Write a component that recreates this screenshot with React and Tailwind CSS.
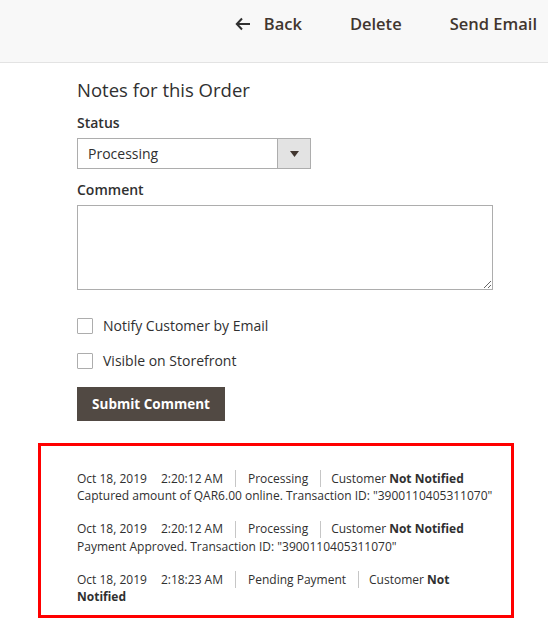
import React from "react";

function Sep() {
  return <span className="inline-block align-middle w-px h-[17px] bg-[#c6c6c6] mx-[12px] -mt-[2px]" />;
}

function Entry({ date, time, status, note, last }) {
  return (
    <div className={last ? "" : "mb-[16px]"}>
      <div className="leading-[17px]">
        <span>{date}</span>
        <span className="ml-[14px]">{time}</span>
        <Sep />
        <span>{status}</span>
        <span className="inline-block align-middle w-px h-[17px] bg-[#c6c6c6] ml-[12px] mr-[10px] -mt-[2px]" />
        <span>Customer </span>
        <span className="font-bold">Not</span> <span className="font-bold">Notified</span>
      </div>
      {note && <div className="leading-[17px]">{note}</div>}
    </div>
  );
}

export default function App() {
  return (
    <div className="w-[548px] h-[632px] bg-white text-[#303030] overflow-hidden" style={{ fontFamily: '"Open Sans", sans-serif' }}>
      <div className="h-[63px] bg-[#f8f8f8] border-b border-[#e3e3e3] flex items-start justify-end pr-[11px] pt-[12px] text-[16.5px] font-semibold text-[#41362f]">
        <div className="flex items-center gap-[13px] leading-[24px]">
          <svg width="16" height="14" viewBox="0 0 16 14" className="mt-[-1px]">
            <path d="M7 1.5 L1.8 7 L7 12.5 M2 7 H15" stroke="#303030" strokeWidth="2" fill="none" />
          </svg>
          <span>Back</span>
        </div>
        <span className="ml-[48px] leading-[24px]">Delete</span>
        <span className="ml-[48px] leading-[24px]">Send Email</span>
      </div>

      <div className="pl-[77px]">
        <div className="mt-[15px] text-[18.5px] leading-[24px]">Notes for this Order</div>
        <div className="mt-[11px] text-[14px] font-semibold leading-[20px]">Status</div>
        <div className="mt-[5px] w-[234px] h-[31px] border border-[#adadad] flex text-[14px]">
          <div className="flex-1 pl-[10px] leading-[29px]">Processing</div>
          <div className="w-[33px] bg-[#e3e3e3] border-l border-[#adadad] flex items-center justify-center">
            <svg width="9" height="6" viewBox="0 0 9 6"><path d="M0 0 H9 L4.5 6 Z" fill="#41362f" /></svg>
          </div>
        </div>
        <div className="mt-[11px] text-[14px] font-semibold leading-[20px]">Comment</div>
        <textarea className="block mt-[5px] w-[416px] h-[85px] border border-[#adadad] bg-white" />
        <div className="mt-[26px] flex items-center text-[14px] leading-[20px]">
          <span className="w-[16px] h-[16px] border border-[#adadad] rounded-[1px] bg-white" />
          <span className="ml-[10px]">Notify Customer by Email</span>
        </div>
        <div className="mt-[15px] flex items-center text-[14px] leading-[20px]">
          <span className="w-[16px] h-[16px] border border-[#adadad] rounded-[1px] bg-white" />
          <span className="ml-[10px]">Visible on Storefront</span>
        </div>
        <button className="mt-[16px] w-[148px] h-[34px] bg-[#514943] text-white text-[13.5px] font-bold">Submit Comment</button>
      </div>

      <div className="mt-[22px] ml-[38px] w-[476px] h-[175px] border-[3px] border-[#ff0000] pl-[36px] pt-[24px] text-[12px]">
        <div className="w-[416px]">
          <Entry date="Oct 18, 2019" time="2:20:12 AM" status="Processing" note={'Captured amount of QAR6.00 online. Transaction ID: "3900110405311070"'} />
          <Entry date="Oct 18, 2019" time="2:20:12 AM" status="Processing" note={'Payment Approved. Transaction ID: "3900110405311070"'} />
          <Entry date="Oct 18, 2019" time="2:18:23 AM" status="Pending Payment" last />
        </div>
      </div>
    </div>
  );
}
